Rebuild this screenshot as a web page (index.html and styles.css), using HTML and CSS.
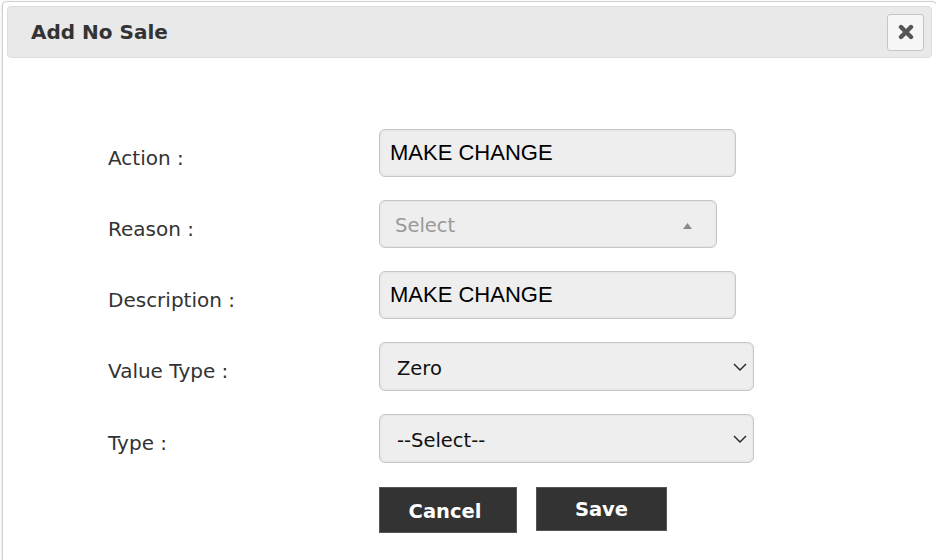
FILE: index.html
```html
<!DOCTYPE html>
<html lang="en">
<head>
    <meta charset="UTF-8">
    <meta name="viewport" content="width=device-width, initial-scale=1.0">
    <title>Add No Sale</title>
    <link rel="stylesheet" href="styles.css">
</head>
<body>

<div class="dialog">
    <div class="dialog-titlebar">
        <span class="dialog-title">Add No Sale</span>
        <button type="button" class="dialog-close" title="Close">
            <svg width="16" height="16" viewBox="0 0 16 16">
                <path d="M3 3 L13 13 M13 3 L3 13" stroke="#555" stroke-width="4.4" stroke-linecap="round"/>
            </svg>
        </button>
    </div>

    <form class="nosale-form">
        <div class="form-row">
            <label for="action">Action :</label>
            <input type="text" id="action" class="field field-wide" value="MAKE CHANGE">
        </div>

        <div class="form-row">
            <label>Reason :</label>
            <div class="field field-combo">
                <span class="placeholder">Select</span>
                <svg class="combo-arrow" width="9" height="6" viewBox="0 0 9 6">
                    <path d="M0 6 L4.5 0 L9 6 Z" fill="#8a8a8a"/>
                </svg>
            </div>
        </div>

        <div class="form-row">
            <label for="description">Description :</label>
            <input type="text" id="description" class="field field-wide" value="MAKE CHANGE">
        </div>

        <div class="form-row">
            <label for="valueType">Value Type :</label>
            <div class="select-wrap">
                <select id="valueType" class="field field-select">
                    <option>Zero</option>
                </select>
                <svg class="select-arrow" width="14" height="8" viewBox="0 0 14 8">
                    <path d="M1 1 L7 7 L13 1" fill="none" stroke="#222" stroke-width="1.4"/>
                </svg>
            </div>
        </div>

        <div class="form-row">
            <label for="type">Type :</label>
            <div class="select-wrap">
                <select id="type" class="field field-select">
                    <option>--Select--</option>
                </select>
                <svg class="select-arrow" width="14" height="8" viewBox="0 0 14 8">
                    <path d="M1 1 L7 7 L13 1" fill="none" stroke="#222" stroke-width="1.4"/>
                </svg>
            </div>
        </div>

        <div class="form-actions">
            <button type="button" class="btn btn-cancel">Cancel</button>
            <button type="submit" class="btn btn-save">Save</button>
        </div>
    </form>
</div>

</body>
</html>
```

FILE: styles.css
```css
html, body {
    margin: 0;
    padding: 0;
    overflow: hidden;
    background-color: #ffffff;
}
body {
    font-family: "DejaVu Sans", Verdana, sans-serif;
    color: #333;
}
.dialog {
    box-sizing: border-box;
    width: 935px;
    height: 559px;
    margin: 1px 0 0 2px;
    padding: 4px;
    border: 1px solid #d0d0d0;
    border-bottom: none;
    border-radius: 5px 5px 0 0;
    box-shadow: -1px 0 2px rgba(0, 0, 0, 0.08);
    background-color: #ffffff;
}
.dialog-titlebar {
    display: flex;
    align-items: center;
    justify-content: space-between;
    box-sizing: border-box;
    height: 52px;
    padding: 0 7px 0 23px;
    background-color: #e9e9e9;
    border: 1px solid #dddddd;
    border-radius: 4px;
}
.dialog-title {
    font-size: 20px;
    font-weight: bold;
    color: #333;
}
.dialog-close {
    display: flex;
    align-items: center;
    justify-content: center;
    box-sizing: border-box;
    width: 37px;
    height: 37px;
    padding: 0;
    background-color: #f6f6f6;
    border: 1px solid #c5c5c5;
    border-radius: 3px;
    cursor: pointer;
}
.nosale-form {
    padding: 71px 0 0 101px;
}
.form-row {
    display: flex;
    align-items: flex-start;
    margin-bottom: 23px;
}
.form-row label {
    width: 271px;
    padding-top: 17px;
    font-size: 20px;
    line-height: 24px;
    color: #333;
}
.field {
    box-sizing: border-box;
    height: 48px;
    margin: 0;
    background-color: #eeeeee;
    border: 1px solid #c6c6c6;
    border-radius: 6px;
    box-shadow: inset 0 0 3px rgba(0, 0, 0, 0.08);
    outline: none;
}
.field-wide {
    width: 357px;
    padding: 0 10px;
    font-family: "Liberation Sans", Arial, sans-serif;
    font-size: 22px;
    color: #000;
}
.field-combo {
    position: relative;
    display: flex;
    align-items: center;
    width: 338px;
    padding: 2px 15px 0;
}
.placeholder {
    font-size: 19.5px;
    color: #999;
}
.combo-arrow {
    position: absolute;
    right: 24px;
    top: 22px;
}
.select-wrap {
    position: relative;
}
.field-select {
    -webkit-appearance: none;
    appearance: none;
    width: 375px;
    height: 49px;
    padding: 3px 17px 0;
    font-family: "DejaVu Sans", Verdana, sans-serif;
    font-size: 19.5px;
    color: #111;
}
.select-arrow {
    position: absolute;
    right: 7px;
    top: 21px;
    pointer-events: none;
}
.form-actions {
    display: flex;
    align-items: flex-start;
    gap: 19px;
    margin-left: 271px;
    padding-top: 1px;
}
.btn {
    box-sizing: border-box;
    padding: 0;
    background-color: #333333;
    color: #ffffff;
    border: 1px solid #555;
    font-family: "DejaVu Sans", Verdana, sans-serif;
    font-size: 19.5px;
    font-weight: bold;
    cursor: pointer;
}
.btn-cancel {
    width: 138px;
    height: 46px;
    padding-top: 3px;
    padding-right: 6px;
}
.btn-save {
    width: 131px;
    height: 44px;
}
```
